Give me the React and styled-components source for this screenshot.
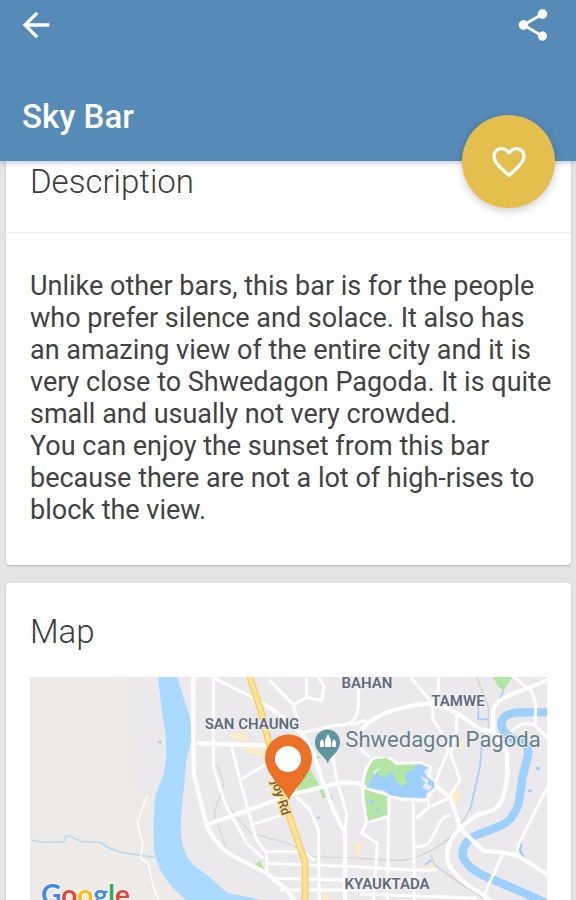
import React, { useState } from "react";
import styled, { createGlobalStyle } from "styled-components";
import { MdArrowBack, MdShare, MdFavorite, MdFavoriteBorder } from "react-icons/md";

const GlobalStyle = createGlobalStyle`
  * {
    box-sizing: border-box;
  }
  body {
    margin: 0;
    background: #e4e4e4;
    color: #424242;
    font-family: Roboto, "Liberation Sans", sans-serif;
  }
`;

const Screen = styled.div`
  display: flex;
  flex-direction: column;
  height: 100vh;
  overflow: hidden;
`;

const Header = styled.header`
  position: relative;
  z-index: 1;
  flex: none;
  display: flex;
  flex-direction: column;
  gap: 50px;
  padding: 5px 24px 22px 16px;
  background: #568ab7;
  color: #fff;
  box-shadow: 0 2px 5px rgba(0, 0, 0, 0.2);
`;

const Toolbar = styled.div`
  display: flex;
  align-items: center;
  justify-content: space-between;
`;

const IconButton = styled.button`
  display: flex;
  padding: 0;
  border: 0;
  background: none;
  color: inherit;
  cursor: pointer;
`;

const Title = styled.h1`
  margin: 0 0 0 6px;
  font-size: 33px;
  font-weight: 500;
  line-height: 44px;
`;

const FavoriteButton = styled(IconButton)`
  position: absolute;
  right: 21px;
  bottom: -47px;
  align-items: center;
  justify-content: center;
  width: 93px;
  height: 93px;
  border-radius: 50%;
  background: #e4bf4d;
  box-shadow: 0 3px 8px rgba(0, 0, 0, 0.2);
`;

const Content = styled.main`
  flex: 1;
  min-height: 0;
  display: flex;
  flex-direction: column;
  gap: 18px;
  padding: 0 5px 0 6px;
  overflow-y: auto;
  scrollbar-width: none;
`;

const Card = styled.section`
  flex: none;
  border-radius: ${(props) => (props.$attached ? "0 0 4px 4px" : "4px")};
  background: #fff;
  box-shadow: 0 1px 2px rgba(0, 0, 0, 0.22);
`;

const CardTitle = styled.h2`
  margin: 0;
  padding: ${(props) => (props.$attached ? "0 24px 30px" : "28px 24px 25px")};
  border-bottom: ${(props) => (props.$divider ? "1px solid #efefef" : "0")};
  color: #3c3c3c;
  font-size: 33px;
  font-weight: 300;
  line-height: 41px;
`;

const CardText = styled.div`
  padding: 37px 14px 39px 24px;
  font-size: 27px;
  line-height: 32px;

  p {
    margin: 0;
  }
`;

const MapBox = styled.div`
  padding: 0 24px 24px;

  svg {
    display: block;
    width: 100%;
    height: auto;
  }
`;

const District = styled.text`
  fill: #5d6b7a;
  stroke: #f3f1f3;
  stroke-width: 2px;
  paint-order: stroke;
  font-size: 15px;
  font-weight: 600;
  text-anchor: middle;
`;

const Place = styled(District)`
  fill: #62808a;
  font-size: 22px;
  font-weight: 400;
`;

const StreetName = styled(District)`
  fill: #7a5a3a;
  stroke: #fbe293;
  font-size: 13px;
  font-weight: 500;
`;

const GoogleLogo = styled.text`
  font-family: Lato, sans-serif;
  font-size: 28px;
  font-weight: 700;
  stroke: #fff;
  stroke-width: 2px;
  paint-order: stroke;
`;

const westRoads = ["M382 375 L352 460 L368 520 L362 565 L385 580 L400 650 L420 700"];

const centreRoads = [
  "M10 20 V220 L12 320 Q20 345 28 380 L50 465 Q70 515 115 550 L230 610 L290 660 L320 700",
  "M20 220 L235 227",
  "M50 465 L300 375 L440 340 Q490 332 540 350",
  "M235 110 L290 150 L335 190 L370 250 L400 340 L430 420 L465 490 V700",
];

const centreLanes = [
  "M70 20 V290 L105 400 L170 520 L220 565",
  "M72 24 L180 78 L235 110",
  "M125 230 L150 330 L185 460 L200 510 L228 548",
  "M150 330 L240 275",
  "M185 465 L290 430",
  "M228 545 H340 L375 572",
  "M225 580 L540 592",
  "M250 625 L540 632",
  "M270 660 H540",
  "M230 545 V610",
  "M320 380 L360 420 L385 480 L388 700",
  "M238 30 L310 105 L350 82 L395 92 L402 50 L385 20",
  "M350 25 V82",
  "M310 105 L325 160",
  "M330 190 L440 165 Q500 170 505 110 V40",
  "M480 165 L530 150",
  "M425 240 L440 330 L470 430 L465 500",
];

const eastRoads = [
  "M215 340 L270 380 L290 440 L300 475 L370 542 L430 548 L470 555 L570 618",
  "M0 185 Q50 115 210 100 L260 115 L300 135 L360 178 L400 186",
  "M400 186 V120 Q410 90 450 75 L570 28",
  "M400 186 L442 250 V310 Q435 400 400 420 L350 435 L300 475",
  "M300 475 Q255 520 262 570 Q275 620 370 675 L400 700",
];

const eastLanes = [
  "M0 235 L30 262 M5 355 L16 300 L40 264 L90 266 L112 280 L180 278 L212 292 L208 316 L220 345",
  "M150 20 L210 90",
  "M235 20 V60 L215 100 L220 150 L240 180 L265 240 L240 300 L218 360",
  "M290 130 V180 L272 250 L300 330 L270 378",
  "M460 20 L515 65 L527 100 L525 170",
  "M455 185 Q490 145 530 170 L570 212",
  "M0 352 L80 374 L125 388 L195 392 L222 355",
  "M88 375 L86 440 L82 700",
  "M160 390 L163 700",
  "M20 455 L85 440",
  "M8 358 L10 400 L20 455 L5 490 L52 520 L40 700",
  "M205 388 V412 L170 445",
  "M205 412 L270 382",
  "M272 435 Q240 440 230 480 L205 520 Q190 532 165 530",
  "M430 548 L370 680",
  "M570 335 L475 525 L470 555",
  "M0 592 L160 600 H230",
  "M0 632 H160",
  "M0 672 L350 684",
];

function Roads({ paths, width }) {
  return (
    <g fill="none" stroke="#fff" strokeWidth={width} strokeLinejoin="round">
      {paths.map((d) => (
        <path key={d} d={d} />
      ))}
    </g>
  );
}

function CityMap() {
  return (
    <svg viewBox="0 0 517 260" role="img" aria-label="Map around Shwedagon Pagoda">
      <rect width="517" height="260" fill="#ebe9ec" />
      <path d="M0 0 H97 L101 50 L105 112 L123 122 L124 173 L160 223 L210 260 H0 Z" fill="#edeae7" />

      <g transform="scale(0.33333)">
        {/* west bank and the Yangon river */}
        <g transform="translate(-30 -21)">
          <path d="M510 580 L600 630 L740 690 V810 H480 Z" fill="#edeae7" />
          <path
            d="M414 20 L425 120 L438 200 L438 270 L430 315 L405 380 L400 470 L402 540 Q410 600 460 655 L520 710 L600 800 H900 L760 700 L700 684 L620 668 Q560 610 525 590 Q480 550 482 460 L490 370 L500 265 L515 210 Q515 140 500 115 L472 20 Z"
            fill="#aadaff"
          />
          <path
            d="M36 511 Q75 520 132 515 L137 499 L150 498 L185 515 L240 516 Q270 542 325 551 L405 562"
            fill="none"
            stroke="#b7dcf2"
            strokeWidth="5"
          />
          <path d="M411 216 L425 211 L422 222 Z" fill="#8fc9f5" />
          <Roads paths={westRoads} width="5" />
        </g>

        {/* downtown */}
        <g transform="translate(480 -21)">
          <path d="M120 185 L175 195 L170 210 L125 205 Z M158 232 L235 240 V258 L165 248 Z" fill="#fbeec6" />
          <path d="M495 522 L515 520 L510 550 L498 560 Z M400 660 H415 V700 H400 Z" fill="#fbeec6" />
          <path
            d="M350 280 L388 345 L325 378 L320 350 Z M365 250 L395 262 L375 270 Z M385 350 L400 350 L416 382 L398 385 Z M194 583 L210 574 L222 595 L215 610 Z"
            fill="#b3e6a3"
          />
          <path d="M412 380 L425 375 L428 388 L415 392 Z M375 445 L390 438 L388 448 Z" fill="#9fd3fb" />
          <g fill="none" stroke="#d5d8da" strokeWidth="4">
            <path d="M82 285 L102 340 L72 430 L112 545" />
            <path d="M120 415 L180 488 L300 522 L370 560 L540 566" />
          </g>
          <Roads paths={centreLanes} width="9" />
          <Roads paths={centreRoads} width="13" />
          <g fill="none" strokeLinejoin="round">
            <path d="M176 10 L212 120 L245 250 L285 400 L345 575 V710" stroke="#f3cf6b" strokeWidth="21" />
            <path d="M176 10 L212 120 L245 250 L285 400 L345 575 V710" stroke="#fde293" strokeWidth="13" />
          </g>
        </g>

        {/* lake and eastern creek */}
        <g transform="translate(990 -21)">
          <path d="M275 370 L300 358 L295 400 L280 395 Z M170 598 L220 582 L230 600 L200 606 Z M300 210 H312 V240 H298 Z" fill="#fbeec6" />
          <g fill="none" stroke="#cfd3d4" strokeWidth="4">
            <path d="M350 20 L385 110 V180" />
            <path d="M0 566 L120 572 Q210 560 290 485 L335 410" />
            <path d="M210 550 L225 585 L300 640 L370 684" />
          </g>
          <g fill="none" stroke="#9dd0fc">
            <path
              d="M570 127 H480 Q424 130 424 165 Q430 200 480 215 Q510 225 504 255 L488 320 L476 400 Q460 450 425 466 L350 495 Q305 515 308 560 Q325 600 390 625 L500 672 L580 710"
              strokeWidth="25"
            />
            <path d="M430 62 L416 95 M355 108 V148 H385 M368 190 L360 290 L330 420 M195 585 L215 570" strokeWidth="5" />
            <path d="M484 515 L480 542 L493 565" strokeWidth="8" />
            <path d="M528 295 H540 M505 362 H516" strokeWidth="8" />
          </g>
          <Roads paths={eastLanes} width="9" />
          <Roads paths={eastRoads} width="13" />
          <path
            d="M18 350 L30 325 L60 298 L90 290 L150 288 L180 282 L205 292 L192 304 L200 320 L222 336 L224 352 L200 370 L198 384 L125 382 L90 376 L72 362 L18 352 Z"
            fill="#9dd0fc"
          />
          <path
            d="M14 345 Q18 292 44 268 L80 264 L98 276 L106 286 L172 283 L160 298 L134 310 L142 340 L128 350 L105 330 L96 304 L84 312 L75 325 L54 314 L58 295 L42 302 L40 325 L24 332 L30 350 Z"
            fill="#b3e6a3"
          />
          <path d="M180 318 L194 324 L206 330 L202 342 L216 350 L206 362 L186 352 L196 340 Z" fill="#ebe9ec" />
          <path d="M12 358 L80 378 L82 434 L24 453 Z M398 20 H458 L430 62 L412 48 Z" fill="#b3e6a3" />
          <path d="M30 390 H42 V402 H30 Z M50 415 H60 V425 H50 Z" fill="#9dd0fc" />
        </g>
      </g>

      <District x="337" y="11">BAHAN</District>
      <District x="428" y="29">TAMWE</District>
      <District x="222" y="52">SAN CHAUNG</District>
      <District x="357" y="212">KYAUKTADA</District>
      <Place x="413" y="70">Shwedagon Pagoda</Place>
      <StreetName transform="translate(247 122) rotate(73)">joy Rd</StreetName>

      {/* pagoda pin */}
      <path d="M298 87 C296 79 285 76 285 65 A12 12 0 1 1 310 65 C310 76 299 79 298 87 Z" fill="#5f959c" />
      <path
        d="M290 70 V65 L292 62 L294 65 V70 Z M295 70 V63 L298 57 L301 63 V70 Z M302 70 V65 L304 62 L306 65 V70 Z"
        fill="#fff"
      />

      {/* marker of the bar */}
      <path
        d="M259 123 C254 111 235 98 235 81 A23 23 0 0 1 282 81 C282 98 264 111 259 123 Z"
        fill="#ea7125"
      />
      <circle cx="258" cy="82" r="13" fill="#fff" />

      <GoogleLogo x="11" y="228">
        <tspan fill="#4285f4">G</tspan>
        <tspan fill="#ea4335">o</tspan>
        <tspan fill="#fbbc05">o</tspan>
        <tspan fill="#4285f4">g</tspan>
        <tspan fill="#34a853">l</tspan>
        <tspan fill="#ea4335">e</tspan>
      </GoogleLogo>
    </svg>
  );
}

function App() {
  const [favorite, setFavorite] = useState(false);

  return (
    <>
      <GlobalStyle />
      <Screen>
        <Header>
          <Toolbar>
            <IconButton type="button" aria-label="Back">
              <MdArrowBack size={40} />
            </IconButton>
            <IconButton type="button" aria-label="Share">
              <MdShare size={38} />
            </IconButton>
          </Toolbar>
          <Title>Sky Bar</Title>
          <FavoriteButton
            type="button"
            aria-label="Add to favorites"
            aria-pressed={favorite}
            onClick={() => setFavorite(!favorite)}
          >
            {favorite ? <MdFavorite size={40} /> : <MdFavoriteBorder size={40} />}
          </FavoriteButton>
        </Header>

        <Content>
          <Card $attached>
            <CardTitle $attached $divider>
              Description
            </CardTitle>
            <CardText>
              <p>
                Unlike other bars, this bar is for the people who prefer silence and solace. It also
                has an amazing view of the entire city and it is very close to Shwedagon Pagoda. It
                is quite small and usually not very crowded.
              </p>
              <p>
                You can enjoy the sunset from this bar because there are not a lot of high-rises to
                block the view.
              </p>
            </CardText>
          </Card>

          <Card>
            <CardTitle>Map</CardTitle>
            <MapBox>
              <CityMap />
            </MapBox>
          </Card>
        </Content>
      </Screen>
    </>
  );
}

export default App;
